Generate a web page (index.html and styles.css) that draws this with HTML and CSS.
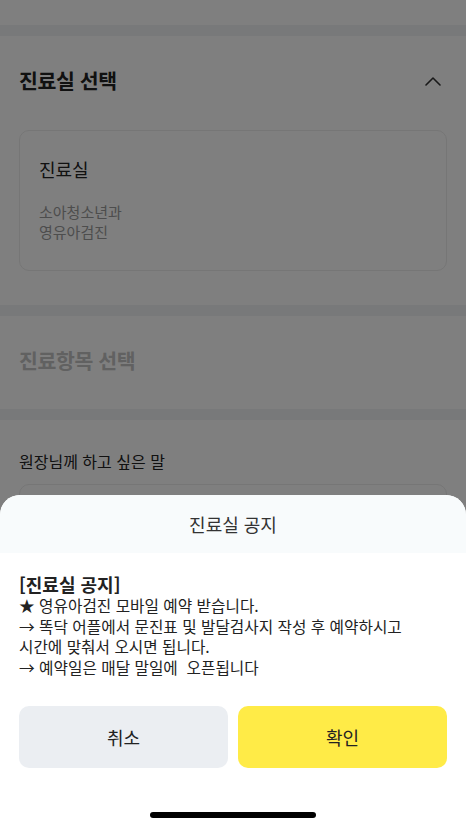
FILE: index.html
```html
<!DOCTYPE html>
<html lang="ko">
<head>
<meta charset="utf-8">
<title>진료실 공지</title>
<link rel="stylesheet" href="styles.css">
</head>
<body>
<div class="page">
  <div class="top-space"></div>
  <div class="divider"></div>
  <section class="section">
    <div class="section-head">
      <h2 class="section-title">진료실 선택</h2>
      <svg class="chevron" width="16" height="10" viewBox="0 0 16 10"><path d="M1 9 L8 2 L15 9" fill="none" stroke="#333" stroke-width="1.6" stroke-linecap="round" stroke-linejoin="round"/></svg>
    </div>
    <div class="room-card">
      <div class="room-name">진료실</div>
      <div class="room-desc">소아청소년과<br>영유아검진</div>
    </div>
  </section>
  <div class="divider"></div>
  <section class="section">
    <div class="section-head short">
      <h2 class="section-title muted">진료항목 선택</h2>
    </div>
  </section>
  <div class="divider"></div>
  <section class="section">
    <div class="memo-label">원장님께 하고 싶은 말</div>
    <div class="memo-box"></div>
  </section>
</div>
<div class="overlay"></div>
<div class="sheet">
  <div class="sheet-head">진료실 공지</div>
  <div class="sheet-body">
    <div class="notice-title">[진료실 공지]</div>
    <p class="notice-text">★ 영유아검진 모바일 예약 받습니다.<br>→ 똑닥 어플에서 문진표 및 발달검사지 작성 후 예약하시고<br>시간에 맞춰서 오시면 됩니다.<br>→ 예약일은 매달 말일에&nbsp; 오픈됩니다</p>
  </div>
  <div class="actions">
    <button class="btn btn-cancel">취소</button>
    <button class="btn btn-ok">확인</button>
  </div>
  <div class="home-bar"></div>
</div>
</body>
</html>
```

FILE: styles.css
```css
* { box-sizing: border-box; }
html, body {
  margin: 0;
  padding: 0;
}
body {
  width: 466px;
  height: 827px;
  overflow: hidden;
  position: relative;
  background: #ffffff;
  font-family: "Noto Sans CJK KR", "Noto Sans", sans-serif;
  color: #222;
}
.page {
  display: flex;
  flex-direction: column;
}
.top-space { height: 25px; }
.divider {
  height: 11px;
  background: #f1f3f5;
}
.section {
  padding: 0 19px;
}
.section-head {
  height: 94px;
  padding-bottom: 6px;
  display: flex;
  align-items: center;
  justify-content: space-between;
}
.section-head.short { height: 93px; padding-bottom: 6px; }
.section-title {
  margin: 0;
  font-size: 20.5px;
  font-weight: 700;
  letter-spacing: -0.4px;
  color: #222;
}
.section-title.muted { color: #c2c2c2; }
.chevron { margin-right: 6px; margin-top: 2px; }
.room-card {
  height: 141px;
  border: 1px solid #ececec;
  border-radius: 10px;
  padding: 25px 19px 0;
  margin-bottom: 34px;
}
.room-name {
  font-size: 18px;
  line-height: 26px;
  color: #222;
}
.room-desc {
  margin-top: 20px;
  font-size: 15px;
  line-height: 20px;
  color: #9a9a9a;
}
.memo-label {
  margin-top: 30px;
  font-size: 16px;
  line-height: 22px;
  color: #222;
}
.memo-box {
  margin-top: 12px;
  height: 120px;
  border: 1px solid #ececec;
  border-radius: 10px;
}
.overlay {
  position: absolute;
  inset: 0;
  background: rgba(0, 0, 0, 0.5);
}
.sheet {
  position: absolute;
  left: 0;
  right: 0;
  bottom: 0;
  height: 332px;
  background: #ffffff;
  border-radius: 20px 20px 0 0;
  overflow: hidden;
  display: flex;
  flex-direction: column;
}
.sheet-head {
  height: 58px;
  background: #f8fbfc;
  display: flex;
  align-items: center;
  justify-content: center;
  font-size: 18px;
  color: #333;
}
.sheet-body {
  padding: 19px 19px 0;
}
.notice-title {
  font-size: 18px;
  line-height: 24px;
  font-weight: 700;
  color: #222;
}
.notice-text {
  margin: 0;
  font-size: 15.7px;
  line-height: 20.5px;
  color: #222;
}
.actions {
  margin-top: 28px;
  padding: 0 19px;
  display: flex;
  gap: 10px;
}
.btn {
  flex: 1;
  height: 62px;
  border: none;
  border-radius: 10px;
  font-family: inherit;
  font-size: 18px;
  color: #222;
}
.btn-cancel { background: #ebeef2; }
.btn-ok { background: #ffeb47; }
.home-bar {
  margin: 44px auto 0;
  width: 166px;
  height: 6px;
  border-radius: 3px;
  background: #000;
}
```
